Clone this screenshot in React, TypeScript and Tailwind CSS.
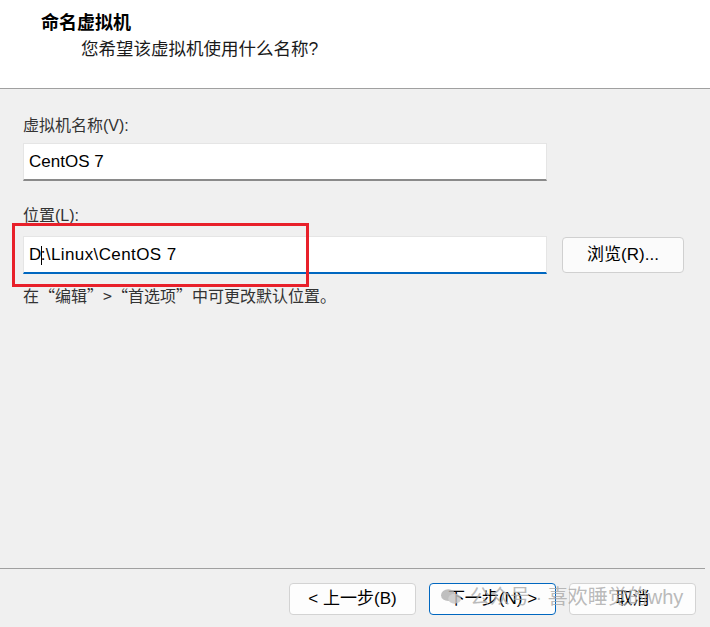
import React from 'react';

const FONT = "font-['Segoe_UI','Liberation_Sans','Noto_Sans_CJK_SC',sans-serif]";
const CJK = "font-['Noto_Sans_CJK_SC','Liberation_Sans',sans-serif]";

const Field: React.FC<{ value: string; focused?: boolean }> = ({ value, focused }) => (
  <div
    className={`h-[38px] w-[524px] bg-white border border-[#e5e5e5] flex items-center pl-[5px] text-[17px] text-black ${
      focused ? 'border-b-2 border-b-[#0067c0]' : 'border-b-2 border-b-[#8a8a8a]'
    }`}
  >
    {focused ? (
      <span className="tracking-[0.4px]">
        D<span className="inline-block w-px h-[19px] bg-black align-middle -mx-px" />:\Linux\CentOS 7
      </span>
    ) : (
      value
    )}
  </div>
);

const WinButton: React.FC<{ children: React.ReactNode; primary?: boolean }> = ({ children, primary }) => (
  <button
    className={`h-[32px] w-[127px] rounded-[4px] bg-[#fdfdfd] text-[17px] text-black flex items-center justify-center ${
      primary ? 'border border-[#0067c0]' : 'border border-[#d3d3d3]'
    }`}
  >
    {children}
  </button>
);

export default function App() {
  return (
    <div className={`relative w-[710px] h-[627px] bg-[#f0f0f0] flex flex-col overflow-hidden ${FONT}`}>
      {/* Header */}
      <div className="h-[89px] bg-white border-b border-[#a0a0a0] pl-[41px] pt-[12px]">
        <div className="text-[18px] font-bold text-black leading-[22px]">命名虚拟机</div>
        <div className="pl-[40px] mt-[4px] text-[17.5px] text-[#1a1a1a] leading-[22px]">您希望该虚拟机使用什么名称?</div>
      </div>

      {/* Body */}
      <div className="flex-1 pl-[23px] pt-[26px]">
        <div className="text-[16px] text-[#333] leading-[22px]">虚拟机名称(V):</div>
        <div className="mt-[6px]">
          <Field value="CentOS 7" />
        </div>

        <div className="mt-[24px] text-[16px] text-[#333] leading-[22px]">位置(L):</div>
        <div className="relative mt-[9px] flex items-center gap-[15px]">
          <Field value="D:\Linux\CentOS 7" focused />
          <button className="h-[36px] w-[122px] rounded-[4px] bg-[#fbfbfb] border border-[#d0d0d0] text-[17px] text-black">
            浏览(R)...
          </button>
          <div className="absolute left-[-11px] top-[-13px] w-[297px] h-[64px] border-[3px] border-[#e8202a]" />
        </div>
        <div className={`mt-[10px] text-[16px] text-[#333] leading-[22px] ${CJK}`}>在“编辑”&gt;“首选项”中可更改默认位置。</div>
      </div>

      {/* Footer */}
      <div className="h-[59px] border-t border-[#a0a0a0] mr-[5px] flex items-start justify-end gap-[13px] pt-[14px] pr-[9px]">
        <WinButton>&lt; 上一步(B)</WinButton>
        <WinButton primary>下一步(N) &gt;</WinButton>
        <WinButton>取消</WinButton>
      </div>

      {/* watermark */}
      <div className="pointer-events-none absolute left-[441px] top-[585px] flex items-center gap-[9px] text-[20px] leading-[24px] text-[#a8a8a8]/80">
        <svg width="20" height="18" viewBox="0 0 22 18" opacity="0.8">
          <ellipse cx="8" cy="7" rx="8" ry="6.5" fill="#b0b0b0" />
          <ellipse cx="15" cy="11" rx="7" ry="5.5" fill="#c4c4c4" />
        </svg>
        <span>公众号 · 喜欢睡觉的why</span>
      </div>
    </div>
  );
}
